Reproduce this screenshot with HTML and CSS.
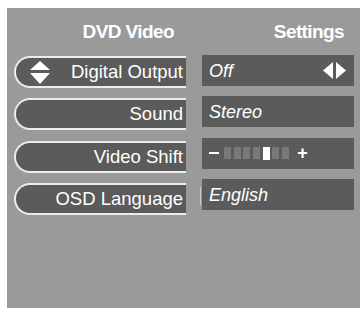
FILE: index.html
```html
<!DOCTYPE html>
<html>
<head>
<meta charset="utf-8">
<link rel="stylesheet" href="styles.css">
</head>
<body>
<div class="panel">
  <div class="head head-left">DVD Video</div>
  <div class="head head-right">Settings</div>
  <div class="col col-left">
    <div class="pill">
      <svg class="updown" width="20" height="23" viewBox="0 0 20 23"><polygon points="10,0 20,9 0,9" fill="#fff"/><polygon points="0,12 20,12 10,23" fill="#fff"/></svg>
      <span class="label">Digital Output</span>
    </div>
    <div class="pill"><span class="label">Sound</span></div>
    <div class="pill"><span class="label">Video Shift</span></div>
    <div class="pill"><span class="label">OSD Language</span></div>
  </div>
  <div class="col col-right">
    <div class="box">
      <span class="value">Off</span>
      <svg class="lr" width="23" height="17" viewBox="0 0 23 17"><polygon points="0,8.5 10,0 10,17" fill="#fff"/><polygon points="13,0 23,8.5 13,17" fill="#fff"/></svg>
    </div>
    <div class="box"><span class="value">Stereo</span></div>
    <div class="box slider">
      <span class="minus"></span>
      <div class="segs">
        <span class="seg"></span><span class="seg"></span><span class="seg"></span><span class="seg"></span><span class="seg on"></span><span class="seg"></span><span class="seg"></span>
      </div>
      <span class="plus">+</span>
    </div>
    <div class="box cursor"><span class="value">English</span></div>
  </div>
</div>
</body>
</html>
```
FILE: styles.css
```css
html, body {
  margin: 0;
  padding: 0;
  background: #ffffff;
}
body {
  width: 362px;
  height: 309px;
  overflow: hidden;
  font-family: "Liberation Sans", Arial, sans-serif;
  color: #ffffff;
}
.panel {
  margin: 8px 0 0 7px;
  width: 353px;
  height: 300px;
  box-sizing: border-box;
  background: #9a9a9a;
  padding: 0 6px 0 7px;
  display: grid;
  grid-template-columns: 172px 152px;
  grid-template-rows: 47px auto;
  column-gap: 16px;
  align-content: start;
}
.head {
  font-weight: bold;
  font-size: 19px;
  letter-spacing: -0.6px;
  text-align: right;
  padding-top: 14px;
  line-height: 20px;
}
.head-left { padding-right: 12px; }
.head-right { padding-right: 10px; }
.col {
  display: flex;
  flex-direction: column;
  gap: 10.4px;
}
.col-left { padding-top: 1px; }
.pill {
  height: 32px;
  box-sizing: border-box;
  border: 2px solid #ececec;
  border-right: none;
  border-radius: 16px 0 0 16px;
  background: #5b5b5b;
  display: flex;
  align-items: center;
  padding: 0 3px 0 14px;
  font-size: 18.5px;
}
.updown { flex: none; margin-top: 1px; }
.label {
  margin-left: auto;
  white-space: nowrap;
  line-height: 20px;
}
.box {
  position: relative;
  height: 31px;
  background: #5b5b5b;
  display: flex;
  align-items: center;
  padding: 0 8px 0 7px;
  font-size: 18px;
  font-style: italic;
}
.value { line-height: 20px; }
.lr { margin-left: auto; }
.slider { padding-left: 7px; }
.minus {
  width: 10px;
  height: 2px;
  background: #fff;
  margin-right: 5px;
}
.segs {
  display: flex;
  gap: 2.7px;
}
.seg {
  width: 7px;
  height: 12px;
  background: #797979;
}
.seg.on { background: #ffffff; height: 13px; }
.plus {
  font-style: normal;
  font-weight: bold;
  font-size: 18px;
  margin-left: 8px;
  line-height: 17px;
}
.cursor::before {
  content: "";
  position: absolute;
  left: -2px;
  top: 8px;
  width: 1px;
  height: 18px;
  background: #c8c8c8;
}
```
